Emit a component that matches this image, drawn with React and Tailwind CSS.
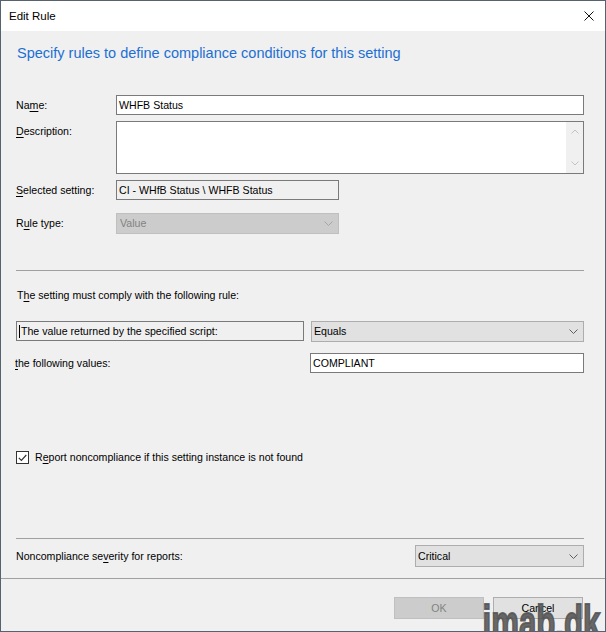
import React from "react";

function Chevron({ color = "#606060" }) {
  return (
    <svg width="9" height="5" viewBox="0 0 9 5">
      <path d="M0.5 0.5 L4.5 4.5 L8.5 0.5" stroke={color} strokeWidth="1" fill="none" />
    </svg>
  );
}

function U({ children }) {
  return <span className="underline underline-offset-[2px] decoration-[1px]">{children}</span>;
}

export default function App() {
  return (
    <div className="w-[606px] h-[632px] relative overflow-hidden bg-[#f0f0f0] border border-[#56626f] font-['Liberation_Sans',Arial,sans-serif] text-[10.6px] leading-[13px] text-black flex flex-col">
      {/* title bar */}
      <div className="h-[30px] shrink-0 bg-white flex items-center justify-between pl-[8px] pr-[11px]">
        <span className="text-[11.5px]">Edit Rule</span>
        <svg width="10" height="10" viewBox="0 0 10 10" className="-mt-[1px]">
          <path d="M0.5 0.5 L9.5 9.5 M9.5 0.5 L0.5 9.5" stroke="#111" strokeWidth="1" fill="none" />
        </svg>
      </div>

      <div className="pl-[15px] pr-[21px] flex flex-col">
        <div className="mt-[13px] h-[18px] leading-[18px] text-[14.5px] text-[#1c6fd3] pl-[1px]">
          Specify rules to define compliance conditions for this setting
        </div>

        {/* Name */}
        <div className="mt-[33px] flex items-center h-[20px]">
          <div className="w-[100px] shrink-0">
            Na<U>m</U>e:
          </div>
          <div className="flex-1 h-[20px] bg-white border border-[#7a7a7a] flex items-center pl-[2px]">
            WHFB Status
          </div>
        </div>

        {/* Description */}
        <div className="mt-[6px] flex items-start h-[53px]">
          <div className="w-[100px] shrink-0 pt-[4px]">
            <U>D</U>escription:
          </div>
          <div className="flex-1 h-[53px] bg-white border border-[#7a7a7a] flex justify-end">
            <div className="w-[17px] bg-[#f0f0f0] flex flex-col items-center justify-between py-[7px]">
              <svg width="8" height="5" viewBox="0 0 8 5">
                <path d="M0.5 4.5 L4 1 L7.5 4.5" stroke="#c2c2c2" strokeWidth="1" fill="none" />
              </svg>
              <svg width="8" height="5" viewBox="0 0 8 5">
                <path d="M0.5 0.5 L4 4 L7.5 0.5" stroke="#c2c2c2" strokeWidth="1" fill="none" />
              </svg>
            </div>
          </div>
        </div>

        {/* Selected setting */}
        <div className="mt-[6px] flex items-center h-[20px]">
          <div className="w-[100px] shrink-0">
            <U>S</U>elected setting:
          </div>
          <div className="w-[223px] h-[20px] bg-[#f0f0f0] border border-[#7a7a7a] flex items-center pl-[2px]">
            CI - WHfB Status \ WHFB Status
          </div>
        </div>

        {/* Rule type */}
        <div className="mt-[13px] flex items-center h-[21px]">
          <div className="w-[100px] shrink-0">
            R<U>u</U>le type:
          </div>
          <div className="w-[223px] h-[21px] bg-[#cccccc] border border-[#bfbfbf] flex items-center justify-between pl-[3px] pr-[5px] text-[#838383]">
            <span>Value</span>
            <Chevron color="#a6a6a6" />
          </div>
        </div>

        <div className="mt-[36px] h-px bg-[#a0a0a0]" />

        <div className="mt-[18px] h-[13px] pl-[1px]">
          T<U>h</U>e setting must comply with the following rule:
        </div>

        {/* rule row */}
        <div className="mt-[19px] flex items-start h-[21px] gap-[7px]">
          <div className="w-[288px] h-[20px] bg-[#f0f0f0] border border-[#7a7a7a] flex items-center pl-[2px]">
            <span className="w-px h-[13px] bg-black mr-[1px]" />
            The value returned by the specified script:
          </div>
          <div className="flex-1 h-[21px] bg-[#e1e1e1] border border-[#adadad] flex items-center justify-between pl-[2px] pr-[5px]">
            <span>Equals</span>
            <Chevron />
          </div>
        </div>

        {/* values row */}
        <div className="mt-[11px] flex items-center h-[20px]">
          <div className="w-[295px] shrink-0 -ml-[1px]">
            <U>t</U>he following values:
          </div>
          <div className="flex-1 h-[20px] bg-white border border-[#7a7a7a] flex items-center pl-[2px]">
            COMPLIANT
          </div>
        </div>

        {/* checkbox */}
        <div className="mt-[78px] flex items-center h-[13px]">
          <div className="w-[13px] h-[13px] bg-white border border-[#333333] flex items-center justify-center">
            <svg width="9" height="8" viewBox="0 0 9 8">
              <path d="M0.8 3.8 L3.4 6.4 L8.3 1" stroke="#333333" strokeWidth="1.2" fill="none" />
            </svg>
          </div>
          <span className="ml-[6px]">
            R<U>e</U>port noncompliance if this setting instance is not found
          </span>
        </div>

        <div className="mt-[74px] h-px bg-[#a0a0a0]" />

        {/* severity */}
        <div className="mt-[6px] flex items-center justify-between h-[22px]">
          <span>
            Noncompliance se<U>v</U>erity for reports:
          </span>
          <div className="w-[169px] h-[22px] bg-[#e1e1e1] border border-[#adadad] flex items-center justify-between pl-[2px] pr-[5px]">
            <span>Critical</span>
            <Chevron />
          </div>
        </div>
      </div>

      <div className="mt-[11px] h-px bg-[#a0a0a0]" />

      <div className="mt-[18px] flex justify-end gap-[9px] pr-[22px]">
        <div className="w-[90px] h-[22px] bg-[#cccccc] border border-[#bfbfbf] flex items-center justify-center text-[#838383]">
          OK
        </div>
        <div className="w-[90px] h-[22px] bg-[#e1e1e1] border border-[#adadad] flex items-center justify-center">
          Cancel
        </div>
      </div>

      <div className="absolute top-[598px] right-[5px] origin-right scale-x-[0.65] text-[48px] leading-[48px] font-bold text-[#555555]/90 [-webkit-text-stroke:2px_rgba(85,85,85,0.9)] tracking-[0px] pointer-events-none">
        imab.dk
      </div>
    </div>
  );
}
